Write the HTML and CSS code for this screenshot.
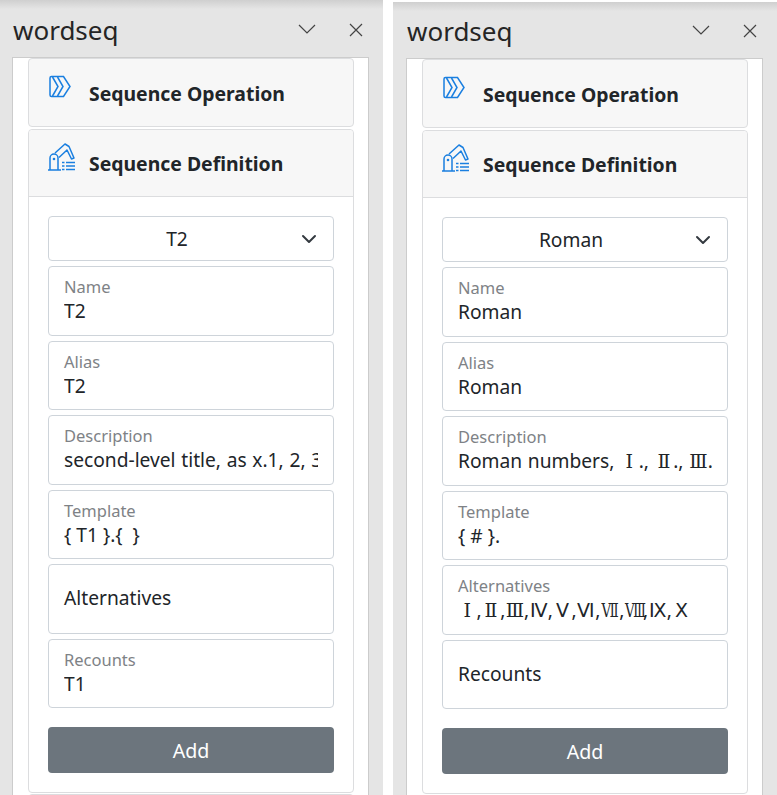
FILE: index.html
```html
<!DOCTYPE html>
<html lang="en">
<head>
  <meta charset="UTF-8">
  <meta name="viewport" content="width=device-width, initial-scale=1.0">
  <title>wordseq</title>
  <link rel="stylesheet" href="styles.css">
</head>
<body>
  <svg class="defs" width="0" height="0" aria-hidden="true">
    <symbol id="icon-operation" viewBox="0 0 22 23">
      <path d="M2.500 1.500a1.500 1.500 0 0 0-1.500 1.500v17a1.500 1.500 0 0 0 1.500 1.500H14.500L21 11.500 14.500 1.500z" fill="none" stroke="currentColor" stroke-width="1.500"/>
      <path d="M3.500 2l5.500 9.500-5.500 9.500M8.500 2l5.500 9.500-5.500 9.500" fill="none" stroke="currentColor" stroke-width="1.500"/>
    </symbol>
    <symbol id="icon-definition" viewBox="0 0 27 28">
      <path d="M0 27h13M2 27V15a4 4 0 0 1 8 0v12" fill="none" stroke="currentColor" stroke-width="1.500"/>
      <circle cx="6" cy="16" r="1.300" fill="currentColor"/>
      <path d="M7 10L17 1l4 2.500 5 11.500-2.500 1-4.500-9-8 7.500" fill="none" stroke="currentColor" stroke-width="1.500" stroke-linejoin="round"/>
      <path d="M14 19.500h2.500M18 19.500h9M14 23h2.500M18 23h9M14 26.500h2.500M18 26.500h9" fill="none" stroke="currentColor" stroke-width="1.500"/>
    </symbol>
    <symbol id="icon-chevron" viewBox="0 0 16 16">
      <path d="M2 5l6 6 6-6" fill="none" stroke="currentColor" stroke-width="2" stroke-linecap="round" stroke-linejoin="round"/>
    </symbol>
  </svg>

  <main class="screens">
    <section class="pane">
      <header class="pane-head">
        <span class="pane-title">wordseq</span>
        <div class="pane-tools">
          <svg class="tool-down" viewBox="0 0 18 10"><path d="M1 1l8 8 8-8" fill="none" stroke="currentColor" stroke-width="1.200"/></svg>
          <svg class="tool-close" viewBox="0 0 14 14"><path d="M1 1l12 12M13 1L1 13" fill="none" stroke="currentColor" stroke-width="1.200"/></svg>
        </div>
      </header>
      <div class="pane-frame">
        <div class="card card-closed">
          <svg class="card-icon icon-op"><use href="#icon-operation"/></svg>
          <h2>Sequence Operation</h2>
        </div>
        <div class="card card-open">
          <div class="card-head">
            <svg class="card-icon icon-def"><use href="#icon-definition"/></svg>
            <h2>Sequence Definition</h2>
          </div>
          <form class="card-body">
            <div class="picker">
              <span>T2</span>
              <svg class="picker-arrow"><use href="#icon-chevron"/></svg>
            </div>
            <div class="field"><span class="field-label">Name</span><div class="field-value">T2</div></div>
            <div class="field"><span class="field-label">Alias</span><div class="field-value">T2</div></div>
            <div class="field"><span class="field-label">Description</span><div class="field-value value-long">second-level title, as x.1, 2, 3, 4</div></div>
            <div class="field"><span class="field-label">Template</span><div class="field-value">{ T1 }.{  }</div></div>
            <div class="field field-empty"><span class="field-label">Alternatives</span></div>
            <div class="field"><span class="field-label">Recounts</span><div class="field-value">T1</div></div>
            <button type="button">Add</button>
          </form>
        </div>
        <div class="card card-next"></div>
      </div>
    </section>

    <section class="pane pane-right">
      <header class="pane-head">
        <span class="pane-title">wordseq</span>
        <div class="pane-tools">
          <svg class="tool-down" viewBox="0 0 18 10"><path d="M1 1l8 8 8-8" fill="none" stroke="currentColor" stroke-width="1.200"/></svg>
          <svg class="tool-close" viewBox="0 0 14 14"><path d="M1 1l12 12M13 1L1 13" fill="none" stroke="currentColor" stroke-width="1.200"/></svg>
        </div>
      </header>
      <div class="pane-frame">
        <div class="card card-closed">
          <svg class="card-icon icon-op"><use href="#icon-operation"/></svg>
          <h2>Sequence Operation</h2>
        </div>
        <div class="card card-open">
          <div class="card-head">
            <svg class="card-icon icon-def"><use href="#icon-definition"/></svg>
            <h2>Sequence Definition</h2>
          </div>
          <form class="card-body">
            <div class="picker">
              <span>Roman</span>
              <svg class="picker-arrow"><use href="#icon-chevron"/></svg>
            </div>
            <div class="field"><span class="field-label">Name</span><div class="field-value">Roman</div></div>
            <div class="field"><span class="field-label">Alias</span><div class="field-value">Roman</div></div>
            <div class="field"><span class="field-label">Description</span><div class="field-value value-long">Roman numbers, <i class="num">Ⅰ</i>., <i class="num">Ⅱ</i>., <i class="num">Ⅲ</i>.</div></div>
            <div class="field"><span class="field-label">Template</span><div class="field-value">{ # }.</div></div>
            <div class="field"><span class="field-label">Alternatives</span><div class="field-value"><i class="num">Ⅰ</i>,<i class="num">Ⅱ</i>,<i class="num">Ⅲ</i>,<i class="num num-plain">Ⅳ</i>,<i class="num num-plain">Ⅴ</i>,<i class="num num-plain">Ⅵ</i>,<i class="num num-tight">Ⅶ</i>,<i class="num num-tight">Ⅷ</i>,<i class="num num-plain">Ⅸ</i>,<i class="num num-plain">Ⅹ</i></div></div>
            <div class="field field-empty"><span class="field-label">Recounts</span></div>
            <button type="button">Add</button>
          </form>
        </div>
        <div class="card card-next"></div>
      </div>
    </section>
  </main>
</body>
</html>
```

FILE: styles.css
```css
body {
  margin: 0;
  background: #fff;
  color: #212529;
  font-family: "Noto Sans", "Noto Sans CJK SC", sans-serif;
}

.defs {
  display: block;
  height: 0;
}

.screens {
  display: grid;
  grid-template-columns: 383px 384px;
  gap: 10px;
  height: 795px;
  overflow: hidden;
}

.pane {
  height: 795px;
  overflow: hidden;
  box-sizing: border-box;
  padding-top: 4px;
  background: #e5e5e5 linear-gradient(#cfcfcf, #e5e5e5 9px) no-repeat;
}

.pane-right {
  margin-top: 2px;
  padding-top: 3px;
  padding-left: 1px;
}

.pane-head {
  display: flex;
  justify-content: space-between;
  height: 53px;
  padding: 0 20px 0 13px;
}

.pane-title {
  font-size: 26px;
  line-height: 52px;
  color: #252525;
}

.pane-tools {
  display: flex;
  gap: 33px;
  padding-top: 19px;
  color: #444;
}

.tool-down {
  width: 18px;
  height: 10px;
  margin-top: 1px;
}

.tool-close {
  width: 14px;
  height: 14px;
}

.pane-frame {
  box-sizing: border-box;
  width: 357px;
  height: 745px;
  margin-left: 12px;
  padding: 0 14px 0 15px;
  overflow: hidden;
  background: #fff;
  border: 1px solid #ccc;
}

.card {
  box-sizing: border-box;
  border: 1px solid #dcdddf;
  border-radius: 4px;
}

.card-closed {
  display: flex;
  height: 69px;
  margin-bottom: 2px;
  background: #f7f7f7;
}

.card-open {
  height: 664px;
  margin-bottom: 1px;
}

.card-next {
  height: 40px;
  background: #f7f7f7;
}

.card-head {
  display: flex;
  height: 66px;
  background: #f7f7f7;
  border-bottom: 1px solid #dcdddf;
  border-radius: 4px 4px 0 0;
}

.card-icon {
  flex: none;
  color: #1a7fe0;
}

.icon-op {
  width: 22px;
  height: 23px;
  margin: 16px 18px 0 20px;
}

.icon-def {
  width: 27px;
  height: 28px;
  margin: 13px 14px 0 19px;
}

h2 {
  margin: 0;
  font-size: 19.400px;
  font-weight: 700;
  line-height: 70px;
  white-space: nowrap;
}

.card-head h2 {
  line-height: 68px;
}

.card-body {
  display: flex;
  flex-direction: column;
  gap: 5px;
  padding: 19px 19px 0;
}

.picker {
  display: flex;
  align-items: center;
  justify-content: center;
  position: relative;
  box-sizing: border-box;
  height: 45.400px;
  padding: 0 44px 0 16px;
  font-size: 19.200px;
  background: #fff;
  border: 1px solid #ced4da;
  border-radius: 4px;
}

.picker-arrow {
  position: absolute;
  right: 16px;
  top: 14px;
  width: 16px;
  height: 16px;
  color: #343a40;
}

.field {
  display: flex;
  flex-direction: column;
  box-sizing: border-box;
  height: 69.500px;
  padding: 10px 15px 0;
  background: #fff;
  border: 1px solid #ced4da;
  border-radius: 4px;
}

.field-label {
  font-size: 16.500px;
  line-height: 20px;
  color: #7e8286;
}

.field-value {
  overflow: hidden;
  font-size: 19.200px;
  line-height: 28px;
  white-space: pre;
}

.value-long {
  word-spacing: 0.700px;
}

.field-empty {
  justify-content: center;
  padding-top: 0;
  padding-bottom: 2px;
}

.field-empty .field-label {
  font-size: 19.200px;
  line-height: 28px;
  color: #212529;
}

.num {
  display: inline-block;
  width: 18.600px;
  font-family: "DejaVu Serif", serif;
  font-size: 19px;
  font-style: normal;
  line-height: 24px;
  text-align: center;
}

.num-plain {
  font-family: "Noto Sans", sans-serif;
  font-size: 19.200px;
}

.num-tight {
  width: 26px;
  margin: 0 -3.700px;
  transform: scaleX(0.7);
}

button {
  height: 46px;
  margin-top: 14px;
  font: inherit;
  font-size: 19.600px;
  color: #fff;
  background: #6c757d;
  border: 0;
  border-radius: 4px;
  cursor: pointer;
}
```
